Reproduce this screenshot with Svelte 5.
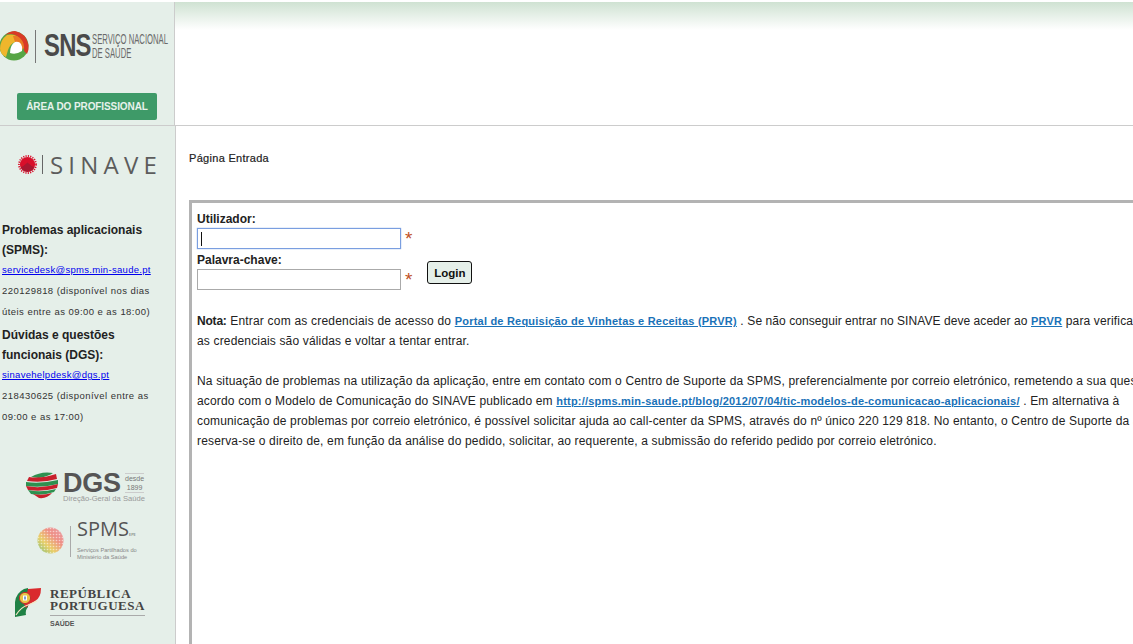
<script>
  const contacts = [
    {
      title: ['Problemas aplicacionais', '(SPMS):'],
      mail: 'servicedesk@spms.min-saude.pt',
      info: ['220129818 (disponível nos dias', 'úteis entre as 09:00 e as 18:00)']
    },
    {
      title: ['Dúvidas e questões', 'funcionais (DGS):'],
      mail: 'sinavehelpdesk@dgs.pt',
      info: ['218430625 (disponível entre as', '09:00 e as 17:00)']
    }
  ];
</script>

<div class="page">
  <header class="top">
    <div class="brand">
      <div class="sns">
        <svg class="sns-mark" width="29" height="34" viewBox="0 0 29 34">
          <circle cx="14" cy="17" r="14.5" fill="#57a545" />
          <path d="M0 20 Q0 11 7 6 Q14 4 20 9 Q24 12 25 17 L22 20 Q21 14 15 13 Q10 15 8 21 L6 28 Q1 26 0 20 Z" fill="#efb62c" />
          <path d="M13 7 Q19 6 23 11 Q25 14 25 18 L22 21 Q22 14 15 13 Z" fill="#ea7b24" />
          <path d="M5 6 Q10 2 15 2 Q26 4 28.5 16 Q29 21 27 25 L24 22 Q25 14 20 9 Q13 3 5 6 Z" fill="#d93a26" />
          <path d="M10 24 Q10 16 15 13 Q19 12 21 15 Q23 18 22 22 Q16 26 10 24 Z" fill="#fff" />
        </svg>
        <span class="sns-rule"></span>
        <span class="sns-name">SNS</span>
        <span class="sns-sub">SERVIÇO NACIONAL<br />DE SAÚDE</span>
      </div>
      <a class="area" href="#area">ÁREA DO PROFISSIONAL</a>
    </div>
    <div class="top-main"><div class="fade"></div></div>
  </header>

  <div class="body">
    <aside class="side">
      <div class="sinave">
        <svg width="19" height="19" viewBox="0 0 20 20">
          <circle cx="10" cy="10" r="8" fill="#d80f2a" />
          <circle cx="10" cy="10" r="9" fill="none" stroke="#d80f2a" stroke-width="1.8" stroke-dasharray="1.3 1.2" />
          <path d="M2.8 13 Q6 12 10 8 Q14 12 17.2 13 A8 8 0 0 1 2.8 13 Z" fill="#a81730" />
        </svg>
        <span class="sinave-rule"></span>
        <span class="sinave-name">SINAVE</span>
      </div>

      <div class="contacts">
        {#each contacts as c}
          <div class="contact">
            {#each c.title as line}
              <div class="c-title">{line}</div>
            {/each}
            <a class="c-mail" href="mailto:{c.mail}">{c.mail}</a>
            {#each c.info as line}
              <div class="c-info">{line}</div>
            {/each}
          </div>
        {/each}
      </div>

      <div class="logos">
        <div class="dgs">
          <svg width="33" height="27" viewBox="0 0 33 27">
            <path d="M6 5 Q16 -1 28 1 Q24 4 14 6 Z" fill="#2e9150" />
            <path d="M4 5 Q16 7 31 2 L32 7 Q18 11 2 9 Z" fill="#c8202c" />
            <path d="M1 10 Q16 12 33 8 L33 12 Q18 16 1 14 Z" fill="#2e9150" />
            <path d="M1 14 Q16 17 33 12 L32 16 Q18 20 3 18 Z" fill="#c8202c" />
            <path d="M3 18 Q16 21 31 17 L29 20 Q17 24 6 22 Z" fill="#2e9150" />
            <path d="M8 22 Q17 24 27 21 Q22 27 14 26 Z" fill="#c8202c" />
          </svg>
          <div class="dgs-text">
            <div class="dgs-row">
              <span class="dgs-name">DGS</span>
              <span class="dgs-year">desde<br />1899</span>
            </div>
            <div class="dgs-sub">Direção-Geral da Saúde</div>
          </div>
        </div>

        <div class="spms">
          <svg width="27" height="27" viewBox="0 0 27 27">
            <defs>
              <linearGradient id="spmsfill" x1="0" y1="1" x2="1" y2="0">
                <stop offset="0" stop-color="#7fbf7a" />
                <stop offset=".35" stop-color="#e9cf6a" />
                <stop offset=".65" stop-color="#ee8f86" />
                <stop offset="1" stop-color="#e8a0a8" />
              </linearGradient>
              <pattern id="spmsdots" width="3" height="3" patternUnits="userSpaceOnUse">
                <circle cx="1.5" cy="1.5" r=".8" fill="#fff" opacity=".55" />
              </pattern>
            </defs>
            <circle cx="13.5" cy="13.5" r="13" fill="url(#spmsfill)" />
            <circle cx="13.5" cy="13.5" r="13" fill="url(#spmsdots)" />
          </svg>
          <span class="spms-rule"></span>
          <div class="spms-text">
            <div class="spms-name">SPMS<small>EPE</small></div>
            <div class="spms-sub">Serviços Partilhados do<br />Ministério da Saúde</div>
          </div>
        </div>

        <div class="rep">
          <svg width="27" height="29" viewBox="0 0 27 29">
            <path d="M9 1 Q1 5 0 14 L0 29 L11 27 Q10 22 13 19 L13 0 Z" fill="#1f8145" />
            <path d="M13 1 L26 0 Q26 10 20 13 Q15 15 11 20 L9 16 Z" fill="#da2a2d" />
            <path d="M1 27 Q6 19 13 17 Q18 15 22 13" fill="none" stroke="#f3e6c4" stroke-width="1.2" />
            <circle cx="10" cy="10" r="5.6" fill="#e9c545" stroke="#c2302c" stroke-width="1" />
            <rect x="8" y="7.5" width="4" height="5" fill="#fff" />
            <rect x="9.4" y="8.5" width="1.2" height="3" fill="#2a5db0" />
          </svg>
          <div class="rep-text">
            <div class="rep-name">REPÚBLICA<br />PORTUGUESA</div>
            <div class="rep-sub">SAÚDE</div>
          </div>
        </div>
      </div>
    </aside>

    <main class="main">
      <h1>Página Entrada</h1>

      <section class="panel">
        <form class="login" onsubmit={(e) => e.preventDefault()}>
          <label for="user">Utilizador:</label>
          <div class="field">
            <input id="user" class="focus" type="text" /><span class="req">*</span>
          </div>
          <label for="pass">Palavra-chave:</label>
          <div class="field">
            <input id="pass" type="password" /><span class="req">*</span>
            <button type="submit">Login</button>
          </div>
        </form>

        <p>
          <strong>Nota:</strong> <span class="lead">Entrar com as credenciais de acesso do</span>
          <a href="#prvr">Portal de Requisição de Vinhetas e Receitas (PRVR)</a> .
          <span class="tail">Se não conseguir entrar no SINAVE deve aceder ao</span> <a href="#prvr">PRVR</a> para verificar se
          <br />as credenciais são válidas e voltar a tentar entrar.
        </p>

        <p>
          Na situação de problemas na utilização da aplicação, entre em contato com o Centro de Suporte da SPMS, preferencialmente por correio eletrónico, remetendo a sua questão de
          <br />acordo com o Modelo de Comunicação do SINAVE publicado em
          <a href="#modelos">http://spms.min-saude.pt/blog/2012/07/04/tic-modelos-de-comunicacao-aplicacionais/</a> .
          Em alternativa à
          <br />comunicação de problemas por correio eletrónico, é possível solicitar ajuda ao call-center da SPMS, através do nº único 220 129 818. No entanto, o Centro de Suporte da SPMS
          <br />reserva-se o direito de, em função da análise do pedido, solicitar, ao requerente, a submissão do referido pedido por correio eletrónico.
        </p>
      </section>
    </main>
  </div>
</div>

<style>
  :global(body) {
    margin: 0;
    background: #fff;
    overflow: hidden;
  }

  .page {
    width: 1133px;
    height: 644px;
    overflow: hidden;
    font-family: "Liberation Sans", Arial, sans-serif;
    color: #111;
  }

  .top {
    box-sizing: border-box;
    display: flex;
    height: 126px;
    padding-top: 2px;
    border-bottom: 1px solid #ccc;
  }

  .brand {
    box-sizing: border-box;
    width: 175px;
    flex: none;
    background: #e5efe9;
    border-right: 1px solid #ccc;
    padding-top: 27px;
  }

  .sns {
    display: flex;
    align-items: center;
    height: 34px;
  }

  .sns-mark {
    flex: none;
  }

  .sns-rule {
    width: 1px;
    height: 33px;
    background: #777;
    margin-left: 6px;
    flex: none;
  }

  .sns-name {
    flex: none;
    width: 48px;
    margin-left: 8px;
    font-size: 31px;
    font-weight: 700;
    letter-spacing: -1px;
    color: #4a4a4a;
    transform: scaleX(.77);
    transform-origin: left;
  }

  .sns-sub {
    flex: none;
    width: 76px;
    font-size: 14px;
    line-height: 14px;
    color: #6a6a6a;
    transform: scaleX(.55);
    transform-origin: left;
    white-space: nowrap;
  }

  .area {
    display: block;
    width: 140px;
    height: 27px;
    margin: 30px 0 0 17px;
    border-radius: 2px;
    background: #3e9a68;
    color: #e6f2eb;
    font-size: 10px;
    font-weight: 700;
    letter-spacing: -.1px;
    line-height: 27px;
    text-align: center;
    text-decoration: none;
  }

  .top-main {
    flex: 1;
  }

  .fade {
    height: 28px;
    background: linear-gradient(#cfe2d2, #fff);
  }

  .body {
    display: flex;
    height: 518px;
  }

  .side {
    box-sizing: border-box;
    width: 176px;
    flex: none;
    background: #e5efe9;
    border-right: 1px solid #ccc;
  }

  .sinave {
    display: flex;
    align-items: center;
    height: 20px;
    margin: 28px 0 0 18px;
  }

  .sinave-rule {
    width: 1px;
    height: 19px;
    background: #666;
    margin-left: 5px;
  }

  .sinave-name {
    font-family: "Open Sans", sans-serif;
    font-size: 24px;
    letter-spacing: 5.2px;
    color: #5c5c5c;
    margin-left: 7px;
  }

  .contacts {
    margin: 46px 0 0 2px;
  }

  .contact + .contact {
    margin-top: 3px;
  }

  .c-title {
    font-size: 12px;
    font-weight: 700;
    line-height: 20px;
    color: #222;
  }

  .c-mail {
    display: block;
    font-size: 9.5px;
    line-height: 20px;
    color: #00e;
    letter-spacing: .3px;
  }

  .c-info {
    font-size: 9.5px;
    line-height: 21px;
    color: #333;
    letter-spacing: .45px;
    white-space: nowrap;
  }

  .logos {
    display: flex;
    flex-direction: column;
  }

  .dgs {
    display: flex;
    margin: 45px 0 0 25px;
    gap: 5px;
  }

  .dgs-row {
    display: flex;
    align-items: center;
    gap: 5px;
    height: 22px;
  }

  .dgs-name {
    width: 57px;
    font-size: 27px;
    line-height: 22px;
    font-weight: 700;
    color: #555;
    letter-spacing: -.3px;
  }

  .dgs-year {
    font-size: 7px;
    line-height: 9px;
    color: #777;
    text-align: center;
    border-top: 1px solid #ccc;
    border-bottom: 1px solid #ccc;
  }

  .dgs-sub {
    font-size: 7.6px;
    color: #999;
    white-space: nowrap;
  }

  .spms {
    display: flex;
    align-items: center;
    height: 34px;
    margin: 21px 0 0 37px;
  }

  .spms svg {
    margin-bottom: 2px;
  }

  .spms-rule {
    width: 1px;
    height: 31px;
    background: #aaa;
    margin: 0 6px;
  }

  .spms-name {
    font-family: "Open Sans", sans-serif;
    font-size: 20px;
    line-height: 16px;
    color: #555;
  }

  .spms-name small {
    font-size: 4px;
  }

  .spms-sub {
    font-size: 5.7px;
    line-height: 7px;
    color: #888;
    white-space: nowrap;
    margin-top: 3.5px;
  }

  .rep {
    display: flex;
    margin: 30px 0 0 15px;
    gap: 8px;
  }

  .rep-name {
    font-family: "Liberation Serif", serif;
    font-size: 13px;
    font-weight: 700;
    line-height: 12px;
    letter-spacing: .5px;
    color: #444;
    white-space: nowrap;
    border-bottom: 1px solid #aaa;
    padding-bottom: 3px;
  }

  .rep-sub {
    font-size: 7px;
    line-height: 8px;
    font-weight: 700;
    color: #555;
    margin-top: 4px;
  }

  .main {
    flex: 1;
    min-width: 0;
    padding-left: 13px;
  }

  h1 {
    font-size: 11px;
    font-weight: 400;
    line-height: 13px;
    letter-spacing: .3px;
    margin: 26px 0 0;
    color: #222;
    -webkit-text-stroke: .2px #222;
  }

  .panel {
    box-sizing: border-box;
    width: 1400px;
    height: 460px;
    margin-top: 35px;
    border: 3px solid #b3b3b3;
    padding: 8px 5px;
    font-size: 12px;
    line-height: 20px;
    letter-spacing: .16px;
    color: #222;
  }

  .login {
    margin-bottom: 18px;
    letter-spacing: 0;
  }

  label {
    display: block;
    font-weight: 700;
    line-height: 16px;
    font-size: 12px;
  }

  .field {
    display: flex;
    align-items: flex-start;
    height: 25px;
  }

  input {
    box-sizing: border-box;
    width: 204px;
    height: 21px;
    border: 1px solid #aaa;
    padding: 0 2px;
    margin: 1px 0 0;
    background: #fff;
    outline: none;
  }

  input.focus {
    border-color: #7a9ee0;
    box-shadow: 0 0 1px #7a9ee0;
    background: linear-gradient(#111, #111) 3px 3px / 1px 14px no-repeat #fff;
  }

  .req {
    color: #c0501f;
    font-size: 19px;
    margin-left: 4px;
    line-height: 20px;
    margin-top: 2px;
  }

  button {
    box-sizing: border-box;
    width: 45px;
    height: 23px;
    margin: -7px 0 0 15px;
    border: 1px solid #111;
    border-radius: 3px;
    background: #e5efe9;
    font: 700 11.5px "Liberation Sans", Arial, sans-serif;
    color: #111;
    padding: 0;
  }

  p {
    margin: 0 0 20px;
    white-space: nowrap;
  }

  p a {
    color: #1a72b8;
    font-weight: 700;
    font-size: 11px;
    line-height: 1;
    letter-spacing: .21px;
  }

  p strong {
    color: #222;
    letter-spacing: -.2px;
  }

  .lead {
    letter-spacing: .2px;
  }

  .tail {
    letter-spacing: .06px;
  }
</style>
